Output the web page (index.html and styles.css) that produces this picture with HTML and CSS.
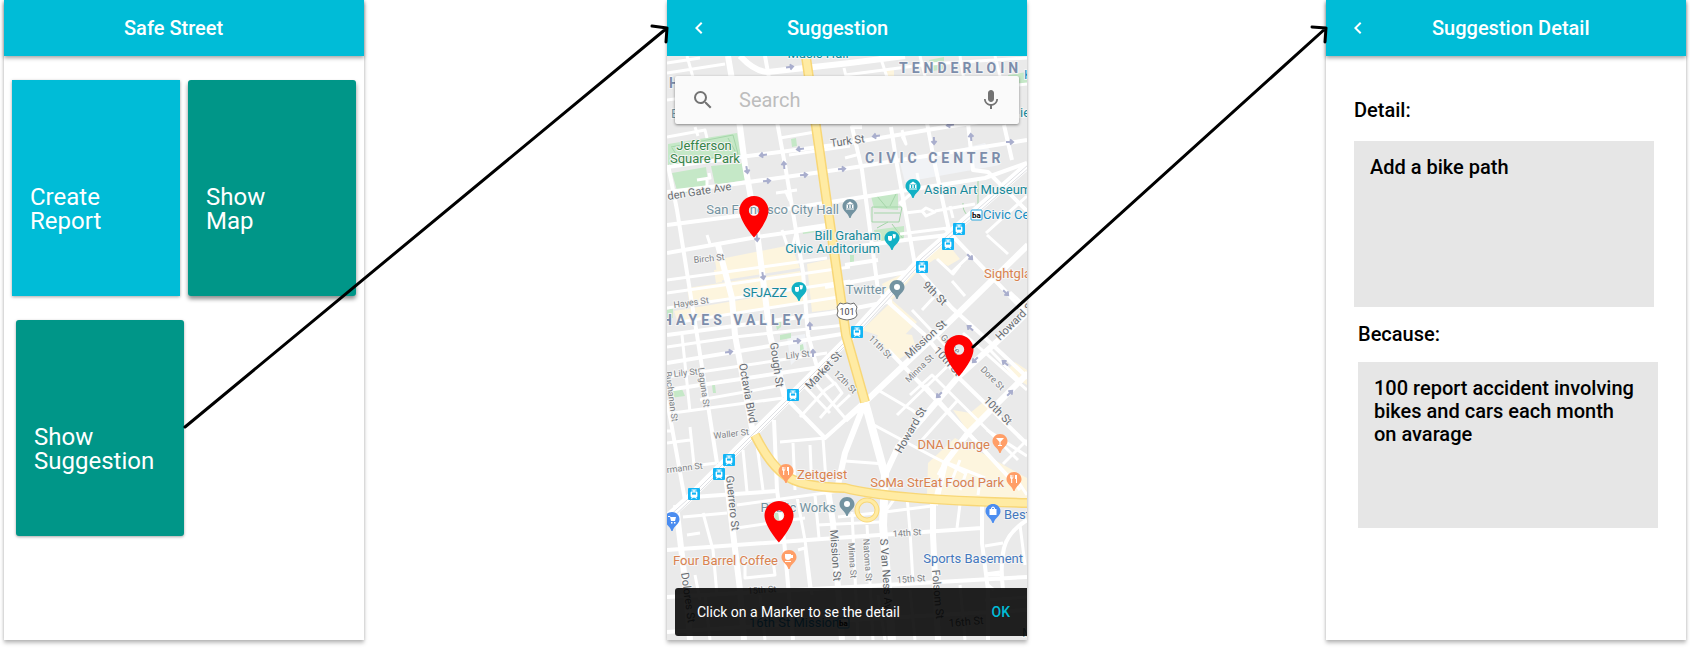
FILE: index.html
```html
<!DOCTYPE html>
<html lang="en">
<head>
<meta charset="utf-8">
<meta name="viewport" content="width=device-width, initial-scale=1">
<title>Safe Street</title>
<link rel="stylesheet" href="styles.css">
</head>
<body>
<main class="flow">
  <section class="phone">
    <header class="bar bar-raised"><h1 class="bar-title bar-title-home">Safe Street</h1></header>
    <nav class="tiles">
      <div class="tile-row">
        <button class="tile tile-current">Create<br>Report</button>
        <button class="tile tile-raised">Show<br>Map</button>
      </div>
      <div class="tile-row tile-row-inset">
        <button class="tile">Show<br>Suggestion</button>
      </div>
    </nav>
  </section>

  <svg class="connector" viewBox="0 0 303 640" preserveAspectRatio="none" aria-hidden="true">
    <path d="M-179 427L303 28M288 26L303 28L302 42"/>
  </svg>

  <section class="phone">
    <header class="bar">
      <button class="icon-button" aria-label="Back"><svg viewBox="0 0 24 24"><path d="M15.41 7.41L14 6l-6 6 6 6 1.41-1.41L10.83 12z"/></svg></button>
      <h1 class="bar-title bar-title-map">Suggestion</h1>
    </header>
    <div class="map-view">
      <svg class="map" viewBox="667 56 360 584" preserveAspectRatio="xMidYMin slice" role="img" aria-label="Street map">
        <defs>
          <path id="drop" d="M0-8C-4.4-8-7.5-4.6-7.5-.8C-7.5 4-2 5.500-.6 11H.6C2 5.500 7.500 4 7.500-.8C7.500-4.600 4.400-8 0-8Z"/>
          <g id="tram"><rect class="tram-bg" x="-6" y="-6" width="12" height="12" rx="1"/><path class="glyph" d="M-2.500-4.500H2.500V-3.500H.6V-2.600H2.600Q3.400-2.600 3.400-1.600V2.400L2.200 3.400L3.200 4.800H2L1.200 3.800H-1.200L-2 4.800H-3.200L-2.200 3.400L-3.400 2.400V-1.600Q-3.400-2.600-2.600-2.600H-.6V-3.500H-2.500Z"/><path class="tram-bg" d="M-2-1.500H2V.6H-2Z"/></g>
          <path id="marker" d="M0-15C-8-15-14.500-8.500-14.500-.5C-14.500 10.300 0 26.500 0 26.500S14.500 10.300 14.500-.5C14.500-8.500 8-15 0-15ZM0 4.700A5.200 5.200 0 1 1 0-5.700A5.200 5.200 0 1 1 0 4.700Z"/>
          <path id="museum" class="glyph" d="M-4-1.500L0-4.500L4-1.500ZM-3.500-1H-2V2H-3.500ZM-.7-1H.7V2H-.7ZM2-1H3.500V2H2ZM-4 2.500H4V3.500H-4Z"/>
          <path id="masks" class="glyph" d="M-4-2H0V1Q0 3-2 3Q-4 3-4 1ZM1-4L4-3.500L3.500-.8Q3 .8 1 .3V-2.600H.3Z"/>
          <path id="fork" class="glyph" d="M-4-4H-3.300V-1.500H-2.700V-4H-2V-1.500H-1.400V-4H-.7V-1L-1.800 0V4H-2.900V0L-4-1ZM1-4H3V4H2V0H1Z"/>
          <path id="arrow" d="M-4 0H3M0-2.500L3 0L0 2.500"/>
        </defs>

        <rect class="land" x="667" y="56" width="360" height="584"/>
        <g class="zone">
          <path d="M715 260L791 245L800 268L718 281ZM714 270L722 269V282L716 283Z"/>
          <path d="M687 288L800 271L805 287L690 306ZM674 311L806 289L808 301L678 323Z"/>
          <path d="M807 264L835 258L845 308L812 312ZM882 284L908 271L917 272L892 300L917 322L904 336L880 336L862 330L890 303Z"/>
          <path d="M917 257L942 237L960 259L948 266L935 259L922 268ZM880 330L912 335L916 348L898 360L876 340Z"/>
          <path d="M953 410L970 413L986 400L995 409L969 433ZM928 463L955 438L1027 478V503L927 494Z"/>
          <path d="M1005 372L1015 362L1027 370V385ZM886 70H894V76H886Z"/>
        </g>
        <path class="plaza" d="M900 163L985 143L1000 165L905 182ZM787 337L805 334L807 350L791 365Z"/>
        <g class="park">
          <path d="M668 144L737 133L741 157L668 168ZM672 173L706 167L709 190L678 194ZM711 166L744 163L746 180L715 185Z"/>
          <path d="M929 60L944 57V69L933 71ZM1008 75L1027 72V83L1010 84ZM791 139L796 138L797 146L792 147ZM802 228L817 226V232L803 234Z"/>
          <path d="M871 196L898 191V210L874 208ZM874 230L904 226V240L877 241ZM850 255H854V262H850ZM780 335L791 333V338L780 340ZM800 345L803 344L804 350L800 351Z"/>
          <path d="M669 391L682 389L685 396L670 398ZM712 385H715L716 393H713ZM775 321H781V327L777 330ZM774 512H781V530L776 529ZM667 310L673 308V318H667Z"/>
        </g>
        <path class="park-line" d="M671 147L733 135L738 154L668 165M672 148L680 160M728 138L735 151M872 207H902L899 222H872ZM874 213H900M877 196L887 208M897 192L890 206M877 228L888 222M904 240L892 224M978 178V205L968 216Q962 210 963 203M978 205L990 195"/>

        <g class="roads roads-thin">
          <path d="M687 56L696 88M667 73L725 64M667 100L740 90M667 137L705 130L707 138M695 127L698 136M667 63L700 58"/>
          <path d="M845 75L930 64L1027 58M845 64L880 59M845 104L1027 84M880 56L888 80M920 56L926 80M960 56L964 80M995 56L1001 80M844 68L849 88"/>
          <path d="M902 130L906 144L902 136M780 138L815 132M845 158L860 154M789 155L850 146"/>
          <path d="M697 180L710 178L709 173M707 178V186M776 193L797 190M785 190L790 201M707 235L710 244M782 230L787 245M793 245L797 229L830 224"/>
          <path d="M667 280L827 258M667 293L850 267M667 308L850 281M680 322L845 296"/>
          <path d="M667 347L735 337L845 325M667 377L827 353M700 400L783 385M673 413L783 398M667 443L690 440M690 427L694 465M667 431H674"/>
          <path d="M682 335L690 412M700 465L717 463M780 442L825 438M823 438L827 495M793 443L795 490M810 445L812 490M757 445L763 490M743 450L747 492"/>
          <path d="M810 377L845 418M800 417L825 390L835 383L842 393L820 418M805 387L830 413M834 383L817 365M836 408L850 395"/>
          <path d="M878 390L912 410L925 420M897 415L957 357M845 461L885 464M874 425L930 455L965 473M922 440L957 401M925 385L990 457M910 395L932 375L1018 460"/>
          <path d="M912 310L945 345M937 259L953 274L960 265M952 272L970 255M952 281L965 296M922 310L934 297M986 233L1027 196M987 235L1008 254M1010 292L1027 308M990 350L1022 383M963 333L1027 390"/>
          <path d="M895 498L885 512L932 506M960 504L957 528M907 497L910 531L913 582M985 546L1003 543M987 575H1000M988 585L994 590M1020 525L1025 565M985 574L1000 572"/>
          <path d="M683 517L727 513M737 505L840 491M687 535L700 533M703 513L713 550L717 595M737 528L805 518M797 497L805 540L812 595M815 495L819 538M838 517L876 513"/>
          <path d="M745 578L775 575L773 560L745 563ZM695 575L700 600M798 550L805 548L810 590M852 512L858 640M867 525L873 640M817 525L880 522M878 595L885 640M910 590L915 640M960 585L965 640M985 600L1027 597M705 595L710 640M760 595L765 640"/>
          <path d="M905 213L922 211L926 208L935 212L926 216L922 211M935 211L975 204M917 173L919 184M950 206L953 218M900 234L948 228M905 208L900 203L918 188"/>
          <path d="M938 475L945 462L985 478M950 485L960 460M960 490L967 470M978 495L981 475M987 430L1027 456M975 440L1020 490M1003 464L1027 440M1013 474L1027 495"/>
        </g>
        <g class="roads">
          <path d="M667 167L740 157L850 143L945 127L1027 115M667 192L727 185L850 168L1027 140M667 225L760 213L850 199L985 178L1027 163M667 253L757 237L827 227"/>
          <path d="M845 248L905 240L948 235M845 265L878 260M825 287L917 270M667 335L830 313L892 301M667 363L848 333M667 390L827 366"/>
          <path d="M862 127L852 127L862 170L878 290L888 302M891 127L897 165L915 265M927 123L935 165L950 235M968 123L973 170L988 172L1028 212M1004 125L1012 160"/>
          <path d="M668 165L677 210L697 335L717 463M765 56L778 127L785 165L803 272L808 335L817 367M667 400L685 500M774 420L777 490L784 540L793 640"/>
          <path d="M693 497L777 491M667 550L850 537L982 528M667 597L850 587L1027 577M667 632L850 620L1027 610M982 505L982 543L988 590V640M1027 520Q1008 532 1004 548Q1000 565 1003 590"/>
          <path d="M785 397L825 438L865 402M917 268L952 308L982 335L1028 378M888 302L925 335L958 377L1028 445M888 350L968 433L1016 485M945 228L1028 315"/>
        </g>
        <g class="roads roads-wide">
          <path d="M740 56Q755 72 768 72L850 63L905 56M728 56L740 127L745 165L757 232L770 335L785 397M718 245L732 298L735 335L753 433"/>
          <path d="M845 420L865 402L938 333L1028 245M885 475L898 447L958 377L1002 337L1028 312M935 505L945 463L968 433L1028 373M865 402L845 453L838 485"/>
          <path d="M676 505L686 590L690 640M726 475L740 590L744 640M828 490L833 523L842 640M933 500V535L938 640"/>
        </g>
        <path class="roads roads-major" d="M865 402L885 475L883 525L892 640M667 518L687 500L850 337L922 258L1028 165"/>
        <path class="rail" d="M667 518L687 500L850 337L922 258L1028 165M669 521L689 502L852 339L924 260L1030 167"/>
        <path class="highway-edge" d="M805 50L822 168L846 335L865 402"/>
        <path class="highway" d="M805 50L822 168L846 335L865 402"/>
        <path class="highway-edge" d="M755 435Q770 465 785 475Q800 487 845 488Q890 500 1030 503"/>
        <path class="highway" d="M755 435Q770 465 785 475Q800 487 845 488Q890 500 1030 503"/>
        <circle class="highway-edge ring" cx="867" cy="510" r="10"/><circle class="highway ring" cx="867" cy="510" r="10"/>

        <g class="arrows">
          <use href="#arrow" transform="translate(790 67) rotate(-8)"/><use href="#arrow" transform="translate(800 149) rotate(172)"/>
          <use href="#arrow" transform="translate(763 155) rotate(172)"/><use href="#arrow" transform="translate(784 165) rotate(-95)"/>
          <use href="#arrow" transform="translate(747 170) rotate(80)"/><use href="#arrow" transform="translate(767 181) rotate(-5)"/>
          <use href="#arrow" transform="translate(804 175) rotate(-5)"/><use href="#arrow" transform="translate(842 169) rotate(-5)"/>
          <use href="#arrow" transform="translate(757 238) rotate(85)"/><use href="#arrow" transform="translate(763 276) rotate(80)"/>
          <use href="#arrow" transform="translate(810 326) rotate(-95)"/><use href="#arrow" transform="translate(729 352) rotate(-8)"/>
          <use href="#arrow" transform="translate(797 341) rotate(-5)"/><use href="#arrow" transform="translate(813 353) rotate(-90)"/>
          <use href="#arrow" transform="translate(876 136) rotate(172)"/><use href="#arrow" transform="translate(934 141) rotate(88)"/>
          <use href="#arrow" transform="translate(971 137) rotate(-95)"/><use href="#arrow" transform="translate(1010 142)"/>
          <use href="#arrow" transform="translate(950 125) rotate(172)"/><use href="#arrow" transform="translate(970 257) rotate(45)"/>
          <use href="#arrow" transform="translate(1006 293) rotate(45)"/><use href="#arrow" transform="translate(970 328) rotate(-140)"/>
          <use href="#arrow" transform="translate(1005 363) rotate(-140)"/><use href="#arrow" transform="translate(975 360) rotate(135)"/>
          <use href="#arrow" transform="translate(939 395) rotate(135)"/><use href="#arrow" transform="translate(1010 393) rotate(-45)"/>
        </g>

        <g class="street">
          <text transform="translate(831 147) rotate(-8)">Turk St</text>
          <text transform="translate(668 200) rotate(-9)">den Gate Ave</text>
          <text transform="translate(770 343) rotate(82)">Gough St</text>
          <text transform="translate(739 364) rotate(80)">Octavia Blvd</text>
          <text transform="translate(810 390) rotate(-47)">Market St</text>
          <text transform="translate(922 286) rotate(44)">9th St</text>
          <text transform="translate(909 359) rotate(-42)">Mission St</text>
          <text transform="translate(933 351) rotate(47)">10th St</text>
          <text transform="translate(983 401) rotate(45)">10th St</text>
          <text transform="translate(901 454) rotate(-60)">Howard St</text>
          <text transform="translate(1000 341) rotate(-45)">Howard St</text>
          <text transform="translate(726 476) rotate(84)">Guerrero St</text>
          <text transform="translate(681 573) rotate(82)">Dolores St</text>
          <text transform="translate(830 530) rotate(86)">Mission St</text>
          <text transform="translate(880 539) rotate(86)">S Van Ness Av</text>
          <text transform="translate(932 570) rotate(85)">Folsom St</text>
          <text transform="translate(949 627) rotate(-5)">16th St</text>
        </g>
        <g class="street street-minor">
          <text transform="translate(694 263) rotate(-6)">Birch St</text>
          <text transform="translate(674 308) rotate(-8)">Hayes St</text>
          <text transform="translate(786 359) rotate(-6)">Lily St</text>
          <text transform="translate(674 377) rotate(-6)">Lily St</text>
          <text transform="translate(698 368) rotate(82)">Laguna St</text>
          <text transform="translate(665 372) rotate(82)">Buchanan St</text>
          <text transform="translate(714 439) rotate(-7)">Waller St</text>
          <text transform="translate(667 473) rotate(-7)">rmann St</text>
          <text transform="translate(833 374) rotate(45)">12th St</text>
          <text transform="translate(868 339) rotate(45)">11th St</text>
          <text transform="translate(909 383) rotate(-45)">Minna St</text>
          <text transform="translate(940 338) rotate(45)">Grace</text>
          <text transform="translate(980 370) rotate(45)">Dore St</text>
          <text transform="translate(893 537) rotate(-4)">14th St</text>
          <text transform="translate(897 583) rotate(-4)">15th St</text>
          <text transform="translate(748 594) rotate(-4)">15th St</text>
          <text transform="translate(848 543) rotate(86)">Minna St</text>
          <text transform="translate(863 539) rotate(86)">Natoma St</text>
        </g>
        <g class="district">
          <text x="899" y="73">TENDERLOIN</text>
          <text x="865" y="163">CIVIC CENTER</text>
          <text x="807" y="325" text-anchor="end">HAYES VALLEY</text>
          <text x="669" y="88">H</text>
        </g>
        <g class="place">
          <text class="green" x="704" y="150" text-anchor="middle">Jefferson</text>
          <text class="green" x="705" y="163" text-anchor="middle">Square Park</text>
          <text class="slate" x="839" y="214" text-anchor="end">San Francisco City Hall</text>
          <text class="teal" x="881" y="240" text-anchor="end">Bill Graham</text>
          <text class="teal" x="880" y="253" text-anchor="end">Civic Auditorium</text>
          <text class="teal" x="924" y="194">Asian Art Museum</text>
          <text class="blue" x="983" y="219">Civic Center</text>
          <text class="teal" x="787" y="297" text-anchor="end">SFJAZZ</text>
          <text class="slate" x="886" y="294" text-anchor="end">Twitter</text>
          <text class="orange" x="984" y="278">Sightglass</text>
          <text class="orange" x="797" y="479">Zeitgeist</text>
          <text class="orange" x="990" y="449" text-anchor="end">DNA Lounge</text>
          <text class="orange" x="1004" y="487" text-anchor="end">SoMa StrEat Food Park</text>
          <text class="slate" x="836" y="512" text-anchor="end">Public Works</text>
          <text class="orange" x="778" y="565" text-anchor="end">Four Barrel Coffee</text>
          <text class="navy" x="1004" y="519">Best Buy</text>
          <text class="navy" x="1023" y="563" text-anchor="end">Sports Basement</text>
          <text class="teal" x="818" y="58" text-anchor="middle">Music Hall</text>
          <text class="teal" x="1020" y="117">ie</text>
          <text class="blue" x="1024" y="79">K</text>
          <text class="slate" x="671" y="118">E</text>
          <text class="blue" x="749" y="627">16th St Mission</text>
          <text class="slate" x="1022" y="637">M</text>
        </g>

        <g class="slate"><use href="#drop" x="850" y="207"/><use href="#drop" x="897" y="288"/><use href="#drop" x="847" y="505"/></g>
        <g class="drop-teal"><use href="#drop" x="913" y="187"/><use href="#drop" x="892" y="239"/><use href="#drop" x="799" y="290"/></g>
        <g class="drop-orange"><use href="#drop" x="786" y="472"/><use href="#drop" x="1000" y="442"/><use href="#drop" x="1014" y="480"/><use href="#drop" x="789" y="558"/></g>
        <g class="drop-blue"><use href="#drop" x="993" y="512"/><use href="#drop" x="672" y="520"/></g>
        <use href="#museum" x="850" y="206"/><use href="#museum" x="913" y="186"/>
        <use href="#masks" x="892" y="238"/><use href="#masks" x="799" y="289"/>
        <use href="#fork" x="786" y="471"/><use href="#fork" x="1014" y="479"/>
        <circle class="glyph" cx="897" cy="287" r="3"/><circle class="glyph" cx="847" cy="504" r="3"/>
        <path class="glyph" d="M996 438H1004L1000.500 442V445H1002V446H998V445H999.500V442ZM785 554H791V555H793V558H791Q790 560 788 560Q785 560 785 557ZM785 561H791V562H785ZM989.500 509H991V508Q993 505 995 508V509H996.500V515H989.500ZM992 509H994V508.500Q993 507 992 508.500ZM668 516H670L670.500 517H676L675 521H671L670 517H668ZM671 522H672.500V523.500H671ZM674 522H675.500V523.500H674Z"/>

        <use href="#tram" x="959" y="229"/><use href="#tram" x="948" y="244"/><use href="#tram" x="922" y="267"/><use href="#tram" x="857" y="332"/>
        <use href="#tram" x="793" y="395"/><use href="#tram" x="729" y="460"/><use href="#tram" x="719" y="474"/><use href="#tram" x="694" y="494"/>
        <g class="bart"><rect x="971" y="210" width="11" height="10" rx="1"/><text x="972" y="218">ba</text></g>
        <g class="bart"><rect x="838" y="618" width="11" height="10" rx="1"/><text x="839" y="626">ba</text></g>
        <g class="shield"><path d="M840 303Q843 305 847 303Q851 305 854 303L857 307Q855 311 857 315Q856 319 847 320Q838 319 837 315Q839 311 837 307Z"/><text x="847" y="315" text-anchor="middle">101</text></g>

        <a class="marker" href="#detail" aria-label="Marker on Octavia"><use href="#marker" x="754" y="211"/></a>
        <a class="marker" href="#detail" aria-label="Marker on Howard"><use href="#marker" x="959" y="350"/></a>
        <a class="marker" href="#detail" aria-label="Marker on Valencia"><use href="#marker" x="779" y="516"/></a>
      </svg>

      <form class="search">
        <svg class="search-icon" viewBox="0 0 24 24"><path d="M15.500 14h-.79l-.28-.27A6.471 6.471 0 0 0 16 9.500 6.500 6.500 0 1 0 9.500 16c1.610 0 3.090-.59 4.230-1.570l.27.28v.79l5 4.990L20.490 19l-4.990-5zm-6 0C7.010 14 5 11.990 5 9.500S7.010 5 9.500 5 14 7.010 14 9.500 11.990 14 9.500 14z"/></svg>
        <input class="search-input" type="text" placeholder="Search" aria-label="Search">
        <button class="icon-button mic" type="button" aria-label="Voice search"><svg viewBox="0 0 24 24"><path d="M12 14c1.660 0 2.990-1.340 2.990-3L15 5c0-1.660-1.340-3-3-3S9 3.340 9 5v6c0 1.660 1.340 3 3 3zm5.300-3c0 3-2.540 5.100-5.300 5.100S6.700 14 6.700 11H5c0 3.410 2.720 6.230 6 6.720V21h2v-3.280c3.280-.48 6-3.300 6-6.720h-1.700z"/></svg></button>
      </form>

      <div class="snackbar" role="status">
        <span>Click on a Marker to se the detail</span>
        <button class="snackbar-action">OK</button>
      </div>
    </div>
  </section>

  <svg class="connector" viewBox="0 0 299 640" preserveAspectRatio="none" aria-hidden="true">
    <path d="M-54 347L299 28M285 27L299 28L298 42"/>
  </svg>

  <section class="phone" id="detail">
    <header class="bar bar-raised">
      <button class="icon-button" aria-label="Back"><svg viewBox="0 0 24 24"><path d="M15.41 7.41L14 6l-6 6 6 6 1.41-1.41L10.83 12z"/></svg></button>
      <h1 class="bar-title bar-title-detail">Suggestion Detail</h1>
    </header>
    <div class="detail">
      <h2 class="label">Detail:</h2>
      <p class="note">Add a bike path</p>
      <div class="reason">
        <h2 class="label">Because:</h2>
        <p class="note">100 report accident involving bikes and cars each month on avarage</p>
      </div>
    </div>
  </section>
</main>
</body>
</html>
```
FILE: styles.css
```css
* { box-sizing: border-box; }

body {
  margin: 0;
  background: #fff;
  color: #000;
  font-family: Roboto, "Noto Sans", sans-serif;
  overflow-x: hidden;
}

button, input { font: inherit; border: 0; }
button { cursor: pointer; }

.flow {
  display: grid;
  grid-template-columns: 360fr 303fr 360fr 299fr 360fr;
  padding: 0 4px 8px;
}

.phone {
  display: flex;
  flex-direction: column;
  min-width: 0;
  min-height: 640px;
  background: #fff;
  box-shadow: 0 3px 4px rgba(0, 0, 0, .26), 0 0 3px rgba(0, 0, 0, .12);
}

.connector {
  width: 100%;
  height: 640px;
  overflow: visible;
  z-index: 2;
  pointer-events: none;
}
.connector path {
  fill: none;
  stroke: #000;
  stroke-width: 3px;
  stroke-linecap: round;
  stroke-linejoin: round;
  vector-effect: non-scaling-stroke;
}

/* App bar */
.bar {
  display: flex;
  align-items: center;
  height: 56px;
  padding-left: 20px;
  background: #00bcd7;
  color: #fff;
}
.bar-raised { box-shadow: 0 2px 4px rgba(0, 0, 0, .36); }
.bar-title { margin: 0; font-size: 20px; font-weight: 500; line-height: 24px; }
.bar-title-home { padding-left: 100px; }
.bar-title-map { padding-left: 76px; }
.bar-title-detail { padding-left: 62px; }

.icon-button {
  width: 24px;
  height: 24px;
  flex: none;
  padding: 0;
  background: none;
  color: inherit;
}
.icon-button svg { display: block; width: 24px; height: 24px; fill: currentColor; }

/* Home tiles */
.tiles {
  display: flex;
  flex-direction: column;
  gap: 24px;
  padding: 24px 8px;
}
.tile-row { display: grid; grid-template-columns: 1fr 1fr; gap: 8px; }
.tile-row-inset { margin: 0 -4px 0 4px; }
.tile {
  display: flex;
  align-items: flex-end;
  height: 216px;
  padding: 0 18px 63px;
  border-radius: 3px;
  background: #009688;
  color: #fff;
  font-size: 24px;
  line-height: 24px;
  text-align: left;
  box-shadow: 0 1px 3px rgba(0, 0, 0, .35);
}
.tile-current { background: #00bcd7; border-radius: 0; }
.tile-raised { box-shadow: 0 3px 4px rgba(0, 0, 0, .45); }

/* Map screen */
.map-view {
  position: relative;
  flex: 1;
  display: flex;
  flex-direction: column;
  justify-content: space-between;
  padding: 20px 0 4px 8px;
  overflow: hidden;
}
.map { position: absolute; inset: 0; width: 100%; height: 100%; }

.search {
  position: relative;
  display: flex;
  align-items: center;
  height: 48px;
  margin-right: 8px;
  padding: 0 16px;
  border-radius: 2px;
  background: #fafafa;
  box-shadow: 0 1px 3px rgba(0, 0, 0, .45);
}
.search-icon { width: 24px; height: 24px; flex: none; fill: #737373; }
.search-input {
  flex: 1;
  min-width: 0;
  padding: 0 0 0 24px;
  background: none;
  color: #333;
  font-size: 20px;
  line-height: 24px;
  outline: 0;
}
.search-input::placeholder { color: #bdbdbd; opacity: 1; }
.mic { color: #737373; }

.snackbar {
  position: relative;
  display: flex;
  align-items: center;
  justify-content: space-between;
  height: 48px;
  padding: 0 17px 0 22px;
  border-radius: 3px 0 0 3px;
  background: rgba(0, 0, 0, .87);
  color: #fff;
  font-size: 14px;
  line-height: 20px;
}
.snackbar-action { padding: 0; background: none; color: #00bcd7; font-weight: 500; }

/* Map drawing */
.land { fill: #eaeaea; }
.zone { fill: #fdf5de; }
.plaza { fill: #f1f3f6; }
.park { fill: #c5e8c7; }
.park-line { fill: none; stroke: #a5d6a9; stroke-width: 1px; }
.roads { fill: none; stroke: #fff; stroke-width: 4px; stroke-linejoin: round; }
.roads-thin { stroke-width: 3px; }
.roads-wide { stroke-width: 6px; }
.roads-major { stroke-width: 8px; }
.rail { fill: none; stroke: #dedfe3; stroke-width: 1px; }
.highway-edge { fill: none; stroke: #f8d777; stroke-width: 10px; }
.highway { fill: none; stroke: #ffeba3; stroke-width: 7px; }
.highway-edge.ring { stroke-width: 5px; }
.highway.ring { stroke-width: 3px; }
.arrows { fill: none; stroke: #a9aecd; stroke-width: 2px; }

.map text { paint-order: stroke; stroke: #f5f5f5; stroke-width: 2px; stroke-linejoin: round; }
.street { fill: #666b70; font-size: 11px; }
.street-minor { fill: #808386; font-size: 9px; }
.district { fill: #7c8dab; font-size: 14px; font-weight: 700; letter-spacing: 4px; }
.place { font-size: 13px; }
.slate { fill: #7393a1; }
.green { fill: #358548; }
.teal { fill: #17899a; }
.blue { fill: #1a8fc4; }
.orange { fill: #d9824f; }
.navy { fill: #4478bd; }
.drop-teal { fill: #12b0c4; }
.drop-orange { fill: #ff9e67; }
.drop-blue { fill: #4b8df0; }
.glyph { fill: #fff; }
.tram-bg { fill: #12b5f5; }
.bart rect { fill: #fff; stroke: #28a5dc; stroke-width: 1px; }
.map .bart text { fill: #000; font-size: 8px; font-weight: 700; stroke: none; }
.shield path { fill: #fff; stroke: #6c6c6c; stroke-width: 1px; }
.map .shield text { fill: #444; font-size: 9px; stroke: none; }
.marker { fill: #f00; }

/* Detail screen */
.detail { padding: 43px 32px 16px 28px; }
.label { margin: 0; font-size: 20px; font-weight: 500; line-height: 23px; }
.note {
  min-height: 166px;
  margin: 19px 0 16px;
  padding: 15px 20px 15px 16px;
  background: #e6e6e6;
  font-size: 20px;
  font-weight: 500;
  line-height: 23px;
}
.reason { margin: 0 -4px 0 4px; }
.reason .note { margin: 16px 0 0; }
```
